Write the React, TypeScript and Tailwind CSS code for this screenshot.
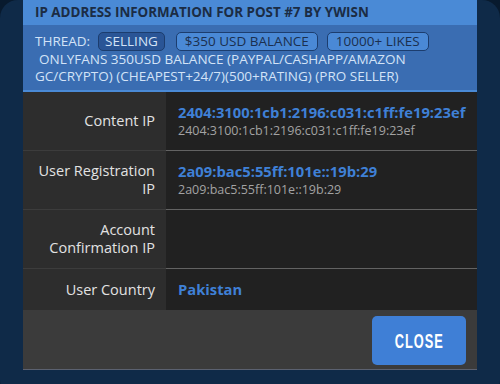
const rows = [
  {
    label: 'Content IP',
    value: '2404:3100:1cb1:2196:c031:c1ff:fe19:23ef',
    sub: '2404:3100:1cb1:2196:c031:c1ff:fe19:23ef',
  },
  {
    label: 'User Registration IP',
    value: '2a09:bac5:55ff:101e::19b:29',
    sub: '2a09:bac5:55ff:101e::19b:29',
  },
  { label: 'Account Confirmation IP', value: '', sub: '' },
  { label: 'User Country', value: 'Pakistan', sub: '' },
];

export default function App() {
  return (
    <div
      className="w-[500px] h-[384px] overflow-hidden bg-[#081a2e]"
      style={{ fontFamily: '"Open Sans", "Noto Sans", sans-serif' }}
    >
      <div className="h-[398px] rounded-[18px] bg-[#0f2a48] px-[23px]">
        <div className="flex flex-col">
          {/* Header */}
          <div className="h-[25px] flex items-center px-[12px] bg-[#4a8ad6]">
            <h2 className="text-[13.4px] font-bold text-[#1b2c44]">
              IP ADDRESS INFORMATION FOR POST #7 BY YWISN
            </h2>
          </div>

          {/* Thread band */}
          <div className="bg-[#3a6db2] px-[12px] pt-[7px] pb-[6px] border-b-2 border-[#4a8ad6] text-[13.5px] text-[#d3e3f7]">
            <div className="h-[19px] flex items-center">
              <span>THREAD:</span>
              <span className="ml-[8px] h-[19px] flex items-center px-[6px] rounded-[5px] border border-[#1c3d6e] bg-[#2a5596] text-[#d3e3f7]">
                SELLING
              </span>
              <span className="ml-[11px] h-[19px] flex items-center px-[8px] rounded-[5px] border border-[#1c3d6e] bg-[#4a89d6] text-[#1b2f4e]">
                $350 USD BALANCE
              </span>
              <span className="ml-[9px] h-[19px] flex items-center px-[8px] rounded-[5px] border border-[#1c3d6e] bg-[#4a89d6] text-[#1b2f4e]">
                10000+ LIKES
              </span>
            </div>
            <div className="leading-[16.5px] pl-[4px]">
              ONLYFANS 350USD BALANCE (PAYPAL/CASHAPP/AMAZON
            </div>
            <div className="leading-[16.5px]">
              GC/CRYPTO) (CHEAPEST+24/7)(500+RATING) (PRO SELLER)
            </div>
          </div>

          {/* Rows */}
          {rows.map((row, i) => (
            <div key={row.label} className="grid grid-cols-[143px_1fr]">
              <div
                className={`bg-[#2d2d2d] pl-[12px] pr-[11px] py-[11px] flex items-center justify-end text-right text-[14.5px] leading-[18px] text-[#e2e2e2] ${
                  i > 0 ? 'border-t border-[#3c3c3c]' : ''
                }`}
              >
                {row.label}
              </div>
              <div
                className={`bg-[#212121] pl-[12px] py-[11px] flex flex-col justify-center ${
                  i > 0 ? 'border-t border-[#636363]' : ''
                }`}
              >
                {row.value && (
                  <div className="text-[14.75px] leading-[19px] font-bold text-[#3f80d6]">
                    {row.value}
                  </div>
                )}
                {row.sub && (
                  <div className="text-[12.5px] leading-[17px] text-[#a3a3a3]">{row.sub}</div>
                )}
              </div>
            </div>
          ))}

          {/* Footer */}
          <div className="h-[60px] bg-[#3b3b3b] border-b border-[#5b6170] flex justify-end items-start pt-[6px] pr-[11px]">
            <button className="w-[94px] h-[49px] rounded-[5px] bg-[#3f7fd6] flex items-center justify-center">
              <span
                className="inline-block scale-x-[0.64] text-[20px] font-bold text-white tracking-[1.5px]"
                style={{ fontFamily: '"Liberation Sans", Arial, sans-serif' }}
              >
                CLOSE
              </span>
            </button>
          </div>
        </div>
      </div>
    </div>
  );
}
